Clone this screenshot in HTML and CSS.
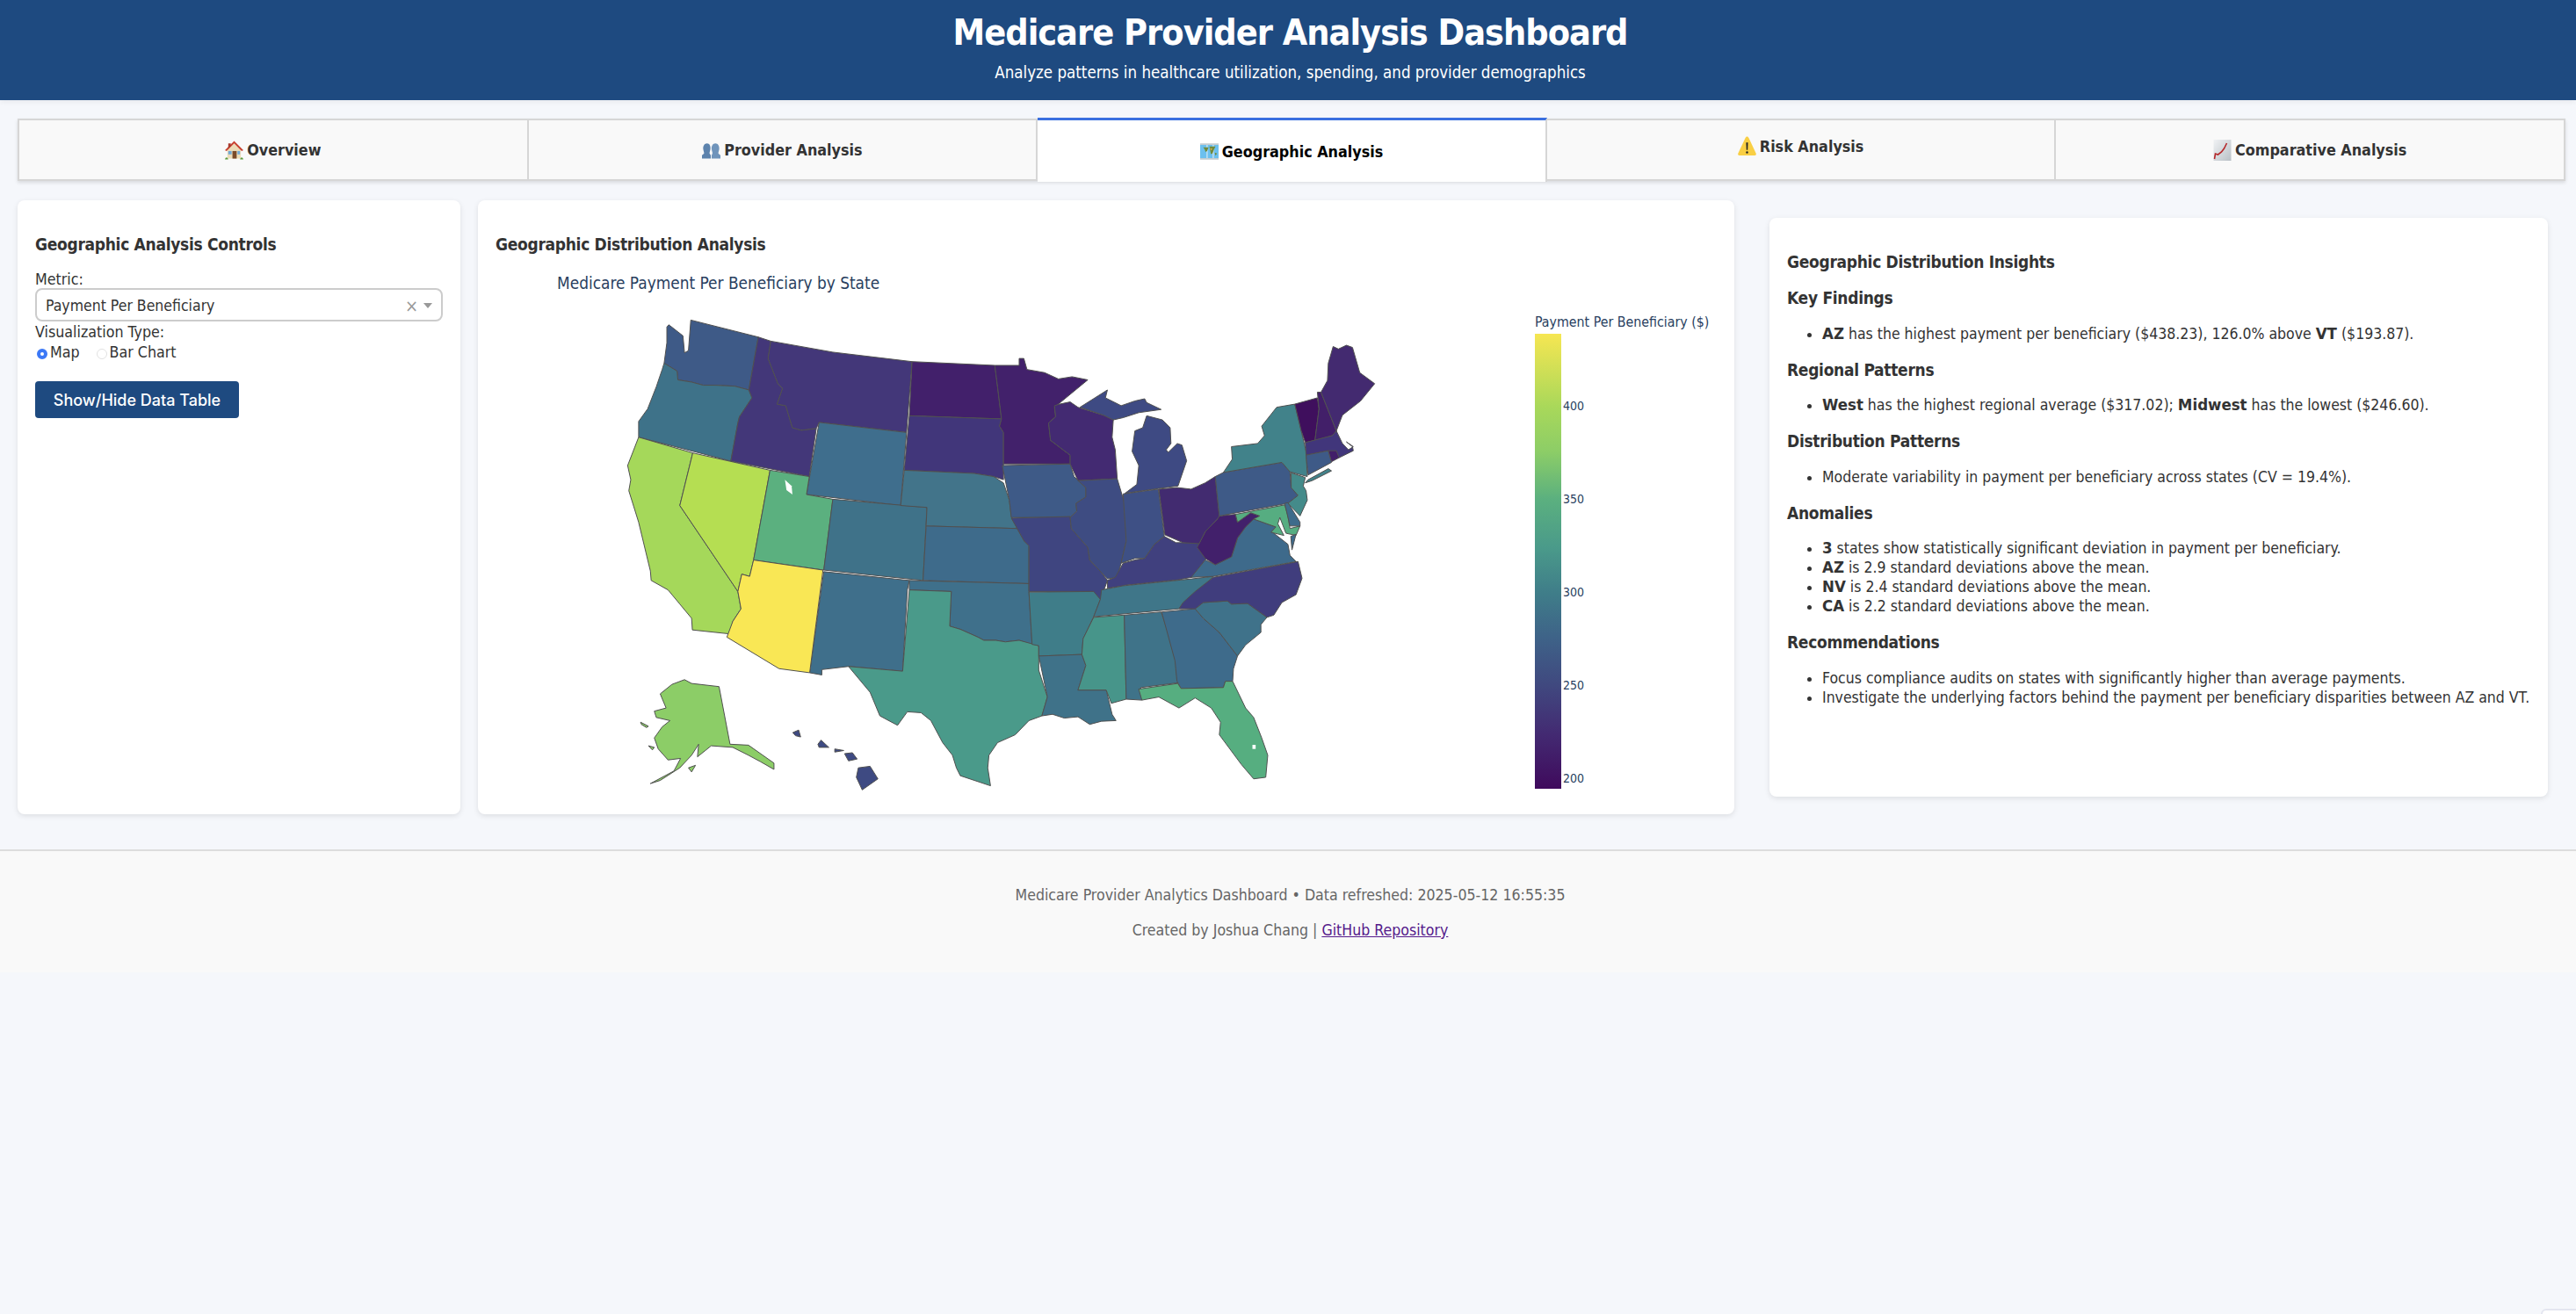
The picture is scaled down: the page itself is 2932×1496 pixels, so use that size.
FILE: index.html
```html
<!DOCTYPE html>
<html lang="en">
<head>
<meta charset="utf-8">
<title>Medicare Provider Analysis Dashboard</title>
<link rel="stylesheet" href="styles.css">
</head>
<body>
<header class="header">
  <h1 class="title">Medicare Provider Analysis Dashboard</h1>
  <p class="subtitle">Analyze patterns in healthcare utilization, spending, and provider demographics</p>
</header>

<nav class="tabs">
  <div class="tab"><svg class="emoji" viewBox="0 0 22 24"><path d="M3 11v11h16V11L11 4z" fill="#ecdcb8"/><path d="M0 12 11 1l11 11-2 1L11 4 2 13z" fill="#c8402f"/><path d="M4 4h3v3L4 10z" fill="#a8392c"/><rect x="9" y="13" width="5" height="9" fill="#7a4a2a"/><rect x="4" y="13" width="4" height="4" fill="#6fa8d8"/><rect x="15" y="13" width="3" height="4" fill="#6fa8d8"/><path d="M0 23c1-3 3-3 4 0zM18 23c1-3 3-3 4 0z" fill="#5c9a3c"/></svg>Overview</div>
  <div class="tab"><svg class="emoji" viewBox="0 0 22 24"><path d="M6 4c3 0 4.500 3 4 7-.3 2-1 3-1 5l1.500 2v4H0v-4l2.500-2c0-2-.7-3-1-5C1 7 3 4 6 4z" fill="#5d83ad"/><path d="M16 4c3 0 5 3 4.500 7-.3 2-1 3-1 5l2.500 2v4H11.500v-4l1-2c0-2-.7-3-1-5-.5-4 1.500-7 4.500-7z" fill="#6f94bb"/></svg>Provider Analysis</div>
  <div class="tab tab-active"><svg class="emoji" viewBox="0 0 24 24"><rect y="3" width="24" height="19" fill="#6cc0ee"/><path d="M8 3h2v19H8zM16 3h2v19h-2z" fill="#e6eef2" opacity=".6"/><path d="M4 7h7l-2 5-2 1-1-3zM12 6h8l-2 4-2 5-2 1-1-5zM19 14l3 1-2 3z" fill="#6f8a3c"/><path d="M13 8l3 1-2 2z" fill="#d9b24c"/><path d="M0 3h24M0 22h24" stroke="#c4ccd0" stroke-width="2"/></svg>Geographic Analysis</div>
  <div class="tab tab-raised"><svg class="emoji emoji-warn" viewBox="0 0 22 24"><path d="M11 1c1 0 1.500.6 2 1.600L21.600 21c.6 1.300 0 2.500-1.400 2.500H1.800c-1.400 0-2-1.200-1.400-2.500L9 2.600C9.500 1.600 10 1 11 1z" fill="#f9cf44"/><path d="M9.900 8h2.200l-.4 9h-1.400z" fill="#222"/><circle cx="11" cy="19.800" r="1.300" fill="#222"/></svg>Risk Analysis</div>
  <div class="tab"><svg class="emoji" viewBox="0 0 20 24"><defs><linearGradient id="chartBg" x1="0" y1="0" x2="1" y2="1"><stop offset="0" stop-color="#f0f2f4"/><stop offset="1" stop-color="#b9c0c6"/></linearGradient></defs><rect width="20" height="24" fill="url(#chartBg)"/><path d="M1 22l1-6 3 1 4-3 3-4 3-6" fill="none" stroke="#b5282a" stroke-width="1.600"/></svg>Comparative Analysis</div>
</nav>

<main class="main">
  <section class="card card-controls">
    <h3 class="card-title">Geographic Analysis Controls</h3>
    <div class="field-label">Metric:</div>
    <div class="select">
      <span class="select-value">Payment Per Beneficiary</span>
      <span class="select-clear">×</span>
      <span class="select-arrow"></span>
    </div>
    <div class="field-label field-label-second">Visualization Type:</div>
    <div class="radios">
      <label class="radio-item"><span class="radio radio-on"></span>Map</label>
      <label class="radio-item"><span class="radio"></span>Bar Chart</label>
    </div>
    <button class="btn">Show/Hide Data Table</button>
  </section>

  <section class="card card-map">
    <h3 class="card-title">Geographic Distribution Analysis</h3>
    <div class="plot">
      <div class="plot-title">Medicare Payment Per Beneficiary by State</div>
      <svg class="map" viewBox="0 0 2000 1562" preserveAspectRatio="none">
        <g class="states">
          <polygon fill="#3e5a87" points="177,90 182,83 218,118 222,172 232,165 238,68 410,122 386,290 350,278 300,275 270,275 240,265 205,258 203,230 170,205 177,140"/>
          <polygon fill="#3e7289" points="170,205 203,230 205,258 240,265 270,275 300,275 350,278 386,290 394,315 362,375 358,395 340,516 105,440 105,390 128,350 150,280 165,225"/>
          <polygon fill="#a5d85a" points="105,440 243,490 210,657 358,930 366,985 345,1025 340,1065 242,1052 240,1015 210,970 180,925 137,895 135,865 105,710 80,610 85,575 77,530"/>
          <polygon fill="#b5de52" points="243,490 440,545 398,830 388,882 368,875 358,930 210,657"/>
          <polygon fill="#433779" points="410,122 442,135 435,190 460,270 472,285 458,335 480,340 497,410 520,418 558,412 540,565 340,516 358,395 362,375 394,315 386,290"/>
          <polygon fill="#433779" points="442,135 600,170 802,200 788,425 565,393 558,412 520,418 497,410 480,340 458,335 472,285 460,270 435,190"/>
          <polygon fill="#3f6e8d" points="565,393 788,425 773,657 533,622"/>
          <polygon fill="#5bb07f" points="440,545 540,565 533,622 600,637 577,862 398,830"/>
          <polygon class="hole" points="478,575 495,595 497,622 482,608"/>
          <polygon fill="#3f7289" points="600,637 840,663 830,895 577,862"/>
          <polygon fill="#3f6f8b" points="577,867 795,895 790,925 778,1183 640,1168 572,1178 572,1195 541,1188"/>
          <polygon fill="#f9e755" points="398,830 575,862 541,1188 463,1175 330,1075 345,1025 366,985 358,930 368,875 388,882"/>
          <polygon fill="#42206b" points="802,200 1013,212 1030,382 795,372"/>
          <polygon fill="#41367a" points="795,372 1030,382 1025,405 1035,425 1035,575 1010,565 960,555 782,545"/>
          <polygon fill="#42748a" points="782,545 960,555 1010,565 1035,585 1050,640 1055,690 1070,730 838,722 840,663 773,657"/>
          <polygon fill="#3e6b8b" points="838,722 1070,730 1088,770 1100,785 1100,905 830,895"/>
          <polygon fill="#3f708b" points="795,895 1100,905 1100,930 1108,1098 1075,1085 1040,1090 1015,1085 985,1085 970,1075 925,1050 898,1040 902,930 795,925"/>
          <polygon fill="#4a9a8a" points="795,925 902,930 898,1040 925,1050 970,1075 985,1085 1015,1085 1040,1090 1075,1085 1125,1102 1125,1180 1147,1265 1133,1325 1100,1340 1065,1385 1020,1410 998,1450 995,1490 1002,1547 925,1515 915,1490 905,1450 880,1410 850,1340 825,1315 790,1312 765,1355 720,1325 695,1250 640,1168 778,1183"/>
          <polygon fill="#42216b" points="1013,212 1075,212 1075,190 1087,190 1095,225 1140,235 1175,255 1210,248 1250,258 1175,335 1165,345 1168,375 1150,395 1155,450 1205,497 1205,525 1035,525 1035,425 1025,405 1030,382 1020,280"/>
          <polygon fill="#3e5a87" points="1032,530 1205,525 1215,565 1245,600 1245,630 1220,650 1222,675 1205,695 1055,695 1050,640"/>
          <polygon fill="#3f4580" points="1055,697 1205,692 1208,730 1250,790 1255,830 1285,870 1300,895 1283,955 1258,953 1265,930 1100,930 1100,785 1088,770 1070,730"/>
          <polygon fill="#3f7d89" points="1100,932 1265,930 1282,955 1265,1010 1238,1080 1235,1130 1125,1135 1125,1102 1108,1098"/>
          <polygon fill="#3f7289" points="1125,1135 1235,1130 1245,1165 1225,1243 1297,1243 1312,1320 1322,1340 1285,1342 1255,1352 1225,1328 1190,1332 1160,1320 1133,1325 1147,1265"/>
          <polygon fill="#432a72" points="1165,340 1178,335 1205,328 1225,345 1290,370 1315,385 1312,440 1320,480 1325,572 1225,578 1205,525 1205,497 1155,450 1150,395 1168,375"/>
          <polygon fill="#3e4a83" points="1230,345 1300,290 1295,315 1335,340 1370,325 1395,318 1400,330 1437,352 1380,362 1340,378 1315,385 1290,370"/>
          <polygon fill="#3e4a83" points="1345,618 1375,590 1380,530 1363,485 1370,420 1390,410 1400,372 1440,385 1460,410 1462,460 1450,480 1455,488 1478,460 1490,465 1502,515 1480,595 1430,603"/>
          <polygon fill="#3e4c82" points="1225,578 1325,572 1345,655 1348,770 1335,840 1325,885 1300,890 1285,870 1255,830 1250,790 1208,730 1205,695 1222,675 1220,650 1245,630 1245,600"/>
          <polygon fill="#3e5085" points="1340,620 1430,605 1445,755 1420,780 1395,825 1370,825 1335,840 1348,770"/>
          <polygon fill="#40407e" points="1300,895 1320,885 1340,840 1370,830 1395,825 1420,780 1445,755 1475,775 1530,775 1555,820 1515,885 1480,893 1345,910 1340,912 1300,920"/>
          <polygon fill="#3f7689" points="1285,925 1340,912 1515,890 1570,882 1540,920 1500,960 1482,985 1265,1010 1282,955"/>
          <polygon fill="#47958a" points="1265,1012 1343,1005 1348,1272 1310,1285 1297,1243 1225,1243 1245,1165 1235,1130 1238,1080"/>
          <polygon fill="#3f7389" points="1343,1005 1437,995 1478,1145 1475,1180 1480,1220 1385,1235 1388,1275 1348,1272"/>
        </g>
        <g class="states">
          <polygon fill="#8ccd67" points="222,1210 240,1222 310,1232 338,1415 385,1418 450,1475 450,1495 415,1470 385,1450 345,1425 290,1420 255,1455 258,1415 240,1450 210,1490 160,1530 135,1540 195,1500 212,1460 180,1465 155,1430 145,1395 165,1360 185,1340 150,1330 145,1310 175,1300 160,1255 190,1225"/>
          <polygon fill="#8ccd67" points="110,1345 130,1358 125,1362 112,1352"/>
          <polygon fill="#8ccd67" points="130,1420 145,1425 140,1433"/>
          <polygon fill="#8ccd67" points="232,1490 250,1482 240,1503"/>
          <polygon fill="#3e4a82" points="498,1378 513,1370 518,1392 505,1388"/>
          <polygon fill="#3e4a82" points="570,1402 590,1425 565,1425 562,1415"/>
          <polygon fill="#3e4a82" points="605,1430 628,1435 605,1440"/>
          <polygon fill="#3e4a82" points="630,1445 650,1442 662,1462 640,1468"/>
          <polygon fill="#3e4a82" points="665,1490 695,1485 715,1525 675,1560 660,1520"/>
        </g>
        <g class="states" transform="translate(1276.800 0) scale(1.0285 1)">
          <polygon fill="#3e6b8b" points="157,995 240,985 260,1015 300,1060 345,1135 335,1175 333,1215 315,1215 310,1235 205,1238 195,1215 190,1150"/>
          <polygon fill="#56ae80" points="100,1240 197,1222 205,1238 310,1235 315,1215 333,1215 365,1300 385,1330 405,1395 420,1450 415,1520 385,1525 355,1480 300,1385 303,1345 280,1300 240,1268 200,1300 150,1265 108,1275"/>
          <polygon class="hole" points="382,1417 390,1417 390,1430 382,1430"/>
          <polygon fill="#3f728a" points="240,985 260,965 320,960 330,970 370,968 418,1012 403,1035 403,1060 365,1100 345,1135 300,1060 260,1015"/>
          <polygon fill="#403d7d" points="200,985 210,965 240,930 285,885 495,835 505,888 490,940 455,965 435,1005 418,1012 370,968 330,970 320,960 260,965 240,985"/>
          <polygon fill="#3e6a8b" points="230,885 265,830 290,845 330,820 345,760 365,725 385,700 440,725 430,740 470,780 475,815 490,835 285,882"/>
          <polygon fill="#42206b" points="300,690 340,685 345,710 378,680 400,690 385,700 365,725 345,760 330,820 290,845 265,825 245,790 265,740 295,700"/>
          <polygon fill="#422b70" points="150,605 195,600 230,605 265,585 290,565 300,690 295,700 265,740 250,778 210,775 165,750"/>
          <polygon fill="#3e5a87" points="290,565 310,552 455,520 475,550 478,600 495,625 470,650 300,690"/>
          <polygon fill="#41828a" points="310,552 332,510 330,470 395,460 412,435 405,405 442,345 487,335 503,420 515,485 518,565 475,550 455,520"/>
          <polygon fill="#41828a" points="520,575 570,540 578,547 530,578 513,585"/>
          <polygon fill="#448b8a" points="478,553 513,568 508,595 515,610 518,640 500,690 470,650 495,625 478,600"/>
          <polygon fill="#56ad81" points="340,685 462,655 470,690 475,730 500,722 490,752 465,745 450,695 445,715 460,752 428,742 440,725 385,700 400,690 378,680 345,710"/>
          <polygon fill="#3e6b8b" points="462,650 470,648 500,710 500,722 475,722"/>
          <polygon fill="#3e6a8b" points="490,748 480,798 477,755"/>
          <polygon fill="#3f0f5d" points="487,335 543,315 547,350 537,450 513,457 503,420"/>
          <polygon fill="#421f69" points="543,297 552,297 590,420 580,435 537,450 547,350"/>
          <polygon fill="#432a70" points="552,297 568,260 570,205 582,152 595,160 615,148 630,155 648,235 685,270 650,325 605,370 590,420"/>
          <polygon fill="#41367b" points="513,457 580,435 590,420 605,460 620,480 632,470 615,455 630,470 632,483 597,505 570,483 515,497"/>
          <polygon fill="#3e5a87" points="515,497 570,483 578,520 520,560"/>
          <polygon fill="#421f69" points="570,483 590,483 597,505 578,518"/>
        </g>
      </svg>
      <div class="cb-title">Payment Per Beneficiary ($)</div>
      <div class="cb-bar"></div>
      <span class="cb-tick cb-400">400</span>
      <span class="cb-tick cb-350">350</span>
      <span class="cb-tick cb-300">300</span>
      <span class="cb-tick cb-250">250</span>
      <span class="cb-tick cb-200">200</span>
    </div>
  </section>

  <div class="insights-col">
    <section class="card card-insights">
      <h3 class="insights-title">Geographic Distribution Insights</h3>
      <h4 class="insights-head">Key Findings</h4>
      <ul class="insights-list">
        <li><b>AZ</b> has the highest payment per beneficiary ($438.23), 126.0% above <b>VT</b> ($193.87).</li>
      </ul>
      <h4 class="insights-head">Regional Patterns</h4>
      <ul class="insights-list">
        <li><b>West</b> has the highest regional average ($317.02); <b>Midwest</b> has the lowest ($246.60).</li>
      </ul>
      <h4 class="insights-head">Distribution Patterns</h4>
      <ul class="insights-list">
        <li>Moderate variability in payment per beneficiary across states (CV = 19.4%).</li>
      </ul>
      <h4 class="insights-head">Anomalies</h4>
      <ul class="insights-list">
        <li><b>3</b> states show statistically significant deviation in payment per beneficiary.</li>
        <li><b>AZ</b> is 2.9 standard deviations above the mean.</li>
        <li><b>NV</b> is 2.4 standard deviations above the mean.</li>
        <li><b>CA</b> is 2.2 standard deviations above the mean.</li>
      </ul>
      <h4 class="insights-head">Recommendations</h4>
      <ul class="insights-list">
        <li>Focus compliance audits on states with significantly higher than average payments.</li>
        <li>Investigate the underlying factors behind the payment per beneficiary disparities between AZ and VT.</li>
      </ul>
    </section>
  </div>
</main>

<footer class="footer">
  <p class="footer-line">Medicare Provider Analytics Dashboard • Data refreshed: 2025-05-12 16:55:35</p>
  <p class="footer-line">Created by Joshua Chang | <a class="footer-link" href="#">GitHub Repository</a></p>
</footer>
<div class="corner-widget"></div>
</body>
</html>
```

FILE: styles.css
```css
* { box-sizing: border-box; }
html, body { margin: 0; padding: 0; }
body {
  min-height: 1496px;
  background: #f5f7fb;
  color: #333;
  font-family: "DejaVu Sans Condensed", "DejaVu Sans", sans-serif;
  font-size: 17.7px;
  position: relative;
  overflow: hidden;
}

.header {
  height: 114px;
  background: #1e4a80;
  color: #fff;
  text-align: center;
  padding: 11px 0 0 5px;
  box-shadow: 0 2px 6px rgba(0,0,0,.06);
}
.title { margin: 0; font-size: 41px; line-height: 52px; font-weight: 700; letter-spacing: -1px; }
.subtitle { margin: 6px 0 0; font-size: 18.6px; line-height: 28px; }

.tabs {
  display: flex;
  margin: 21px 12px 0 20px;
  height: 71px;
  box-shadow: 0 2px 4px rgba(0,0,0,.12);
}
.tab {
  flex: 1;
  display: flex;
  align-items: center;
  justify-content: center;
  gap: 4px;
  background: #f9f9f9;
  border: 2px solid #d6d6d6;
  border-left-width: 0;
  font-weight: 700;
  font-size: 17.8px;
  color: #333;
}
.tab:first-child { border-left-width: 2px; }
.tab-active {
  background: #fff;
  color: #000;
  border-top: 3px solid #3a6fe0;
  border-bottom: 0;
  height: 73px;
  margin-top: -1px;
}
.tab-raised { padding-bottom: 8px; }
.emoji { width: 21px; height: 24px; flex: none; }
.emoji-warn { margin-top: -2px; }

.main {
  display: flex;
  align-items: flex-start;
  gap: 20px;
  padding: 0 20px;
  margin-top: 22px;
  height: 739px;
}
.card {
  background: #fff;
  border-radius: 8px;
  box-shadow: 0 2px 6px rgba(0,0,0,.1);
  padding: 20px;
}
.card-controls { flex: none; width: 504px; height: 699px; }
.card-map { flex: none; width: 1430px; height: 699px; }
.card-title { margin: 18px 0 0; font-size: 19px; line-height: 24px; font-weight: 700; letter-spacing: -.3px; color: #333; }

.field-label { margin-top: 17px; line-height: 22px; }
.field-label-second { margin-top: 1px; }
.select {
  height: 38px;
  margin-top: -1px;
  border: 2px solid #ccc;
  border-radius: 8px;
  background: #fff;
  display: flex;
  align-items: center;
  padding: 2px 10px 0;
  font-size: 17.5px;
}
.select-value { flex: 1; }
.select-clear { color: #999; font-size: 20px; margin-right: 6px; }
.select-arrow {
  width: 0; height: 0;
  border-left: 5px solid transparent;
  border-right: 5px solid transparent;
  border-top: 6px solid #999;
}
.radios { display: flex; gap: 17px; line-height: 22px; margin-top: 1px; }
.radio-item { display: flex; align-items: center; }
.radio {
  width: 12px; height: 12px;
  border-radius: 50%;
  border: 1px solid #e2e2e2;
  background: #fff;
  margin: 3px 3px 0 2px;
}
.radio-on { border: 4px solid #3b78f6; }
.btn {
  display: block;
  width: 232px;
  height: 42px;
  margin-top: 22px;
  border: 0;
  border-radius: 4px;
  background: #1e4a80;
  color: #fff;
  font-family: Inter, sans-serif;
  font-weight: 500;
  font-size: 18px;
}

.plot { position: relative; height: 610px; margin-top: 10px; }
.plot-title { position: absolute; left: 70px; top: 10px; color: #2a3f5f; font-size: 18.9px; line-height: 24px; white-space: nowrap; }
.map { position: absolute; left: 116px; top: 40px; width: 893px; height: 560px; overflow: visible; }
.states polygon { stroke: #505050; stroke-width: 1; vector-effect: non-scaling-stroke; stroke-linejoin: round; }
.states .hole { fill: #fff; stroke: none; }
.cb-title { position: absolute; left: 1183px; top: 57px; color: #2a3f5f; font-size: 15.8px; line-height: 20px; white-space: nowrap; }
.cb-bar {
  position: absolute;
  left: 1183px; top: 80px;
  width: 30px; height: 518px;
  background: linear-gradient(to top, #3f0a5c 0%, #432a72 12%, #40487f 22.6%, #3e6288 33%, #3f7d89 43%, #4a9a8a 53%, #5bb07f 63.7%, #8ccd67 74%, #a9d85a 84%, #f6e652 100%);
}
.cb-tick { position: absolute; left: 1215px; color: #2a3f5f; font-size: 14px; line-height: 16px; }
.cb-400 { top: 154px; }
.cb-350 { top: 260px; }
.cb-300 { top: 366px; }
.cb-250 { top: 472px; }
.cb-200 { top: 578px; }

.insights-col { flex: 1; padding: 20px 12px 0 20px; min-width: 0; }
.card-insights { height: 659px; }
.insights-title { margin: 18px 0 0; font-size: 19px; line-height: 24px; font-weight: 700; letter-spacing: -.3px; }
.insights-head { margin: 18px 0 0; font-size: 19px; line-height: 24px; font-weight: 700; letter-spacing: -.3px; }
.insights-title + .insights-head { margin-top: 17px; }
.insights-list { margin: 17.5px 0 0; padding: 0 0 0 40px; font-size: 17.5px; line-height: 22px; white-space: nowrap; }
.insights-list b { font-size: 18.5px; line-height: 20px; }

.footer {
  background: #f9f9f9;
  border-top: 2px solid #ddd;
  height: 140px;
  text-align: center;
  color: #666;
  font-size: 17.6px;
  padding: 39px 0 0 5px;
}
.footer-line { margin: 0 0 18px; line-height: 22px; }
.footer-link { color: #551a8b; text-decoration: underline; }

.corner-widget {
  position: absolute;
  left: 2892px; top: 1490px;
  width: 60px; height: 40px;
  border: 2px solid #e4e6f0;
  border-radius: 6px;
  background: #fff;
}
```
